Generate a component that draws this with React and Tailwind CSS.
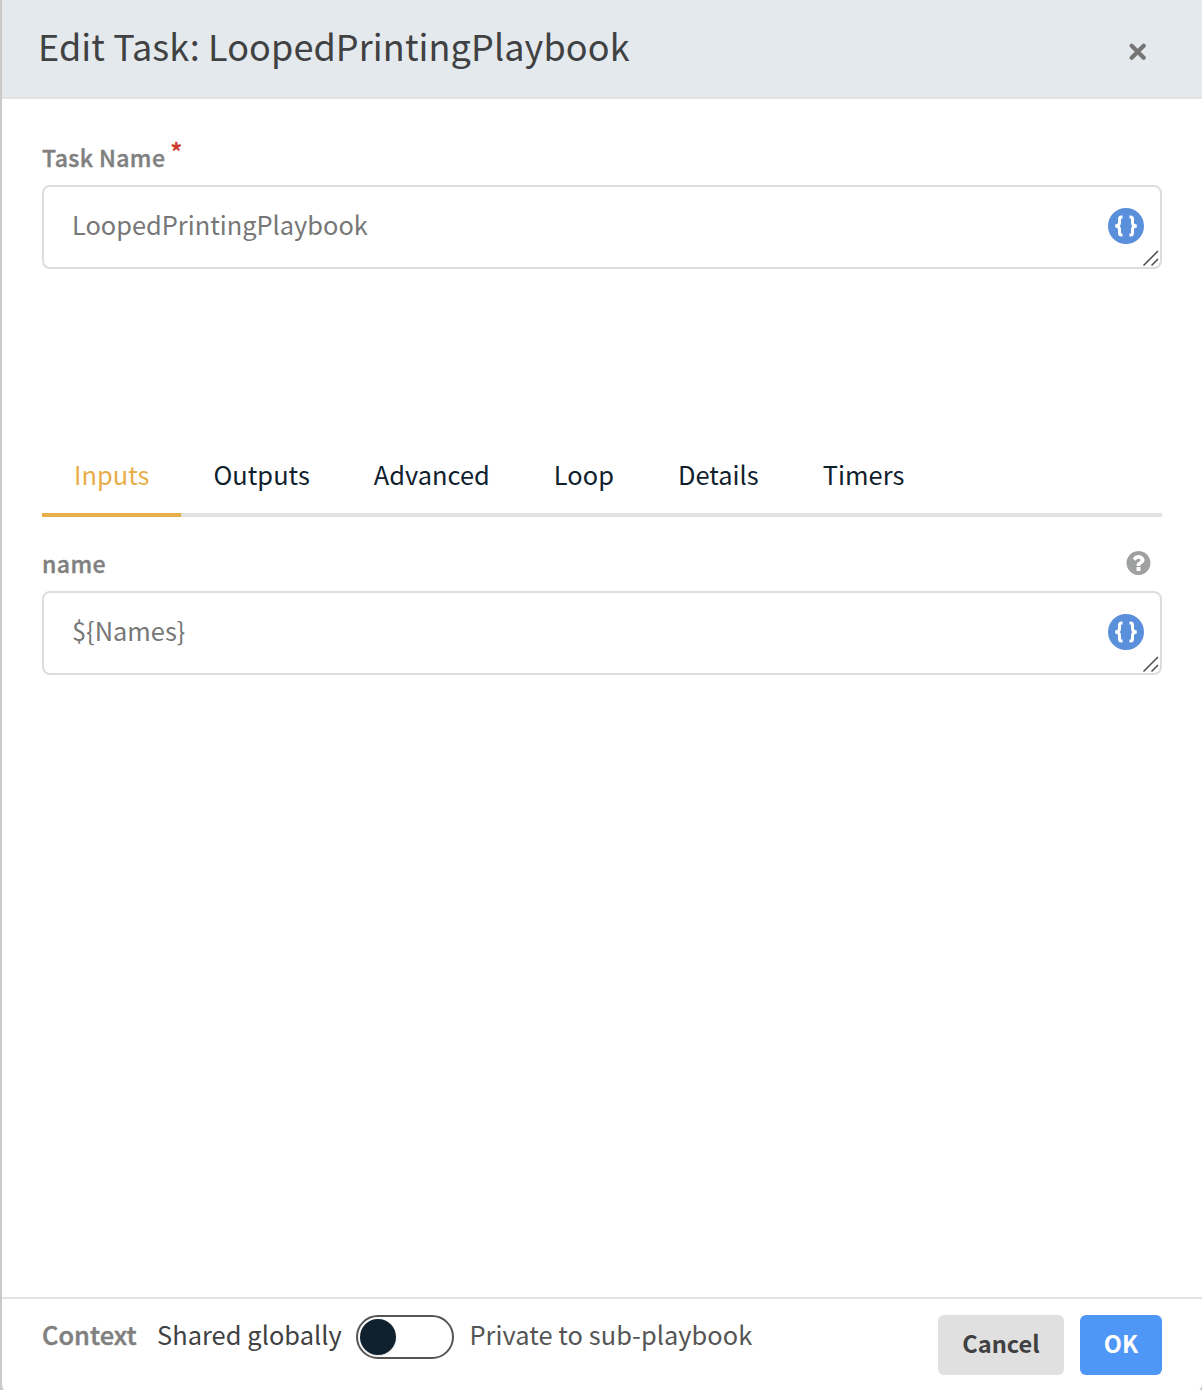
import { useState } from "react";

const HELP_PATH =
  "M1024 1376v-192q0-14-9-23t-23-9h-192q-14 0-23 9t-9 23v192q0 14 9 23t23 9h192q14 0 23-9t9-23zm256-672q0-88-55.5-163t-138.5-116-170-41q-243 0-371 213-15 24 8 42l132 100q7 6 19 6 16 0 25-12 53-68 86-92 34-24 86-24 48 0 85.500 26t37.500 59q0 38-20 61t-68 45q-63 28-115.500 86.500t-52.500 125.500v36q0 14 9 23t23 9h192q14 0 23-9t9-23q0-19 21.500-49.500t54.500-49.500q32-18 49-28.500t46-35 44.500-48 28-60.500 12.500-81zm384 192q0 209-103 385.500t-279.500 279.500-385.500 103-385.500-103-279.500-279.500-103-385.500 103-385.500 279.500-279.500 385.500-103 385.500 103 279.500 279.500 103 385.500z";

function BracesButton() {
  return (
    <button type="button" aria-label="Insert expression" className="absolute right-4 top-[21px] size-9">
      <svg viewBox="0 0 36 36" className="size-9" fill="none">
        <circle cx="18" cy="18" r="18" fill="#5a8fdb" />
        <g stroke="#fff" strokeWidth="3">
          <path d="M14.500 9h-1q-2 0-2 2v3.800q0 3.200-4.300 3.200q4.300 0 4.300 3.200v3.800q0 2 2 2h1" />
          <path d="M21.500 9h1q2 0 2 2v3.800q0 3.200 4.300 3.200q-4.300 0-4.300 3.200v3.800q0 2-2 2h-1" />
        </g>
      </svg>
    </button>
  );
}

function Field({ value }) {
  return (
    <div className="relative flex h-[84px] items-start rounded-lg border-2 border-[#dddddd] bg-white pl-7 pt-[19px] text-[25.4px] leading-9 text-[#777777]">
      <span>{value}</span>
      <BracesButton />
      <svg viewBox="0 0 18 18" className="absolute bottom-0 right-0 size-[18px]" stroke="#4a4a4a" strokeWidth="1.5">
        <path d="M1.500 16.500 16 2M9.500 16.500l6.500-6.500" />
      </svg>
    </div>
  );
}

const tabs = ["Inputs", "Outputs", "Advanced", "Loop", "Details", "Timers"];

export default function App() {
  const [active, setActive] = useState("Inputs");
  return (
    <div className="h-[1390px] w-[1202px] overflow-hidden bg-[#c9c9c9] font-['Noto_Sans_CJK_SC',sans-serif]">
      <div className="flex h-[1392px] flex-col overflow-hidden rounded-b-lg border-l-2 border-[#c9c9c9] bg-white">
        <header className="flex h-[99px] shrink-0 items-start justify-between border-b-2 border-[#e1e3e5] bg-[#e4e9ed] pl-9 pr-[55px]">
          <h1 className="mt-[21px] text-[36px] leading-[48px] tracking-[0.1px] text-[#404142]">Edit Task: LoopedPrintingPlaybook</h1>
          <button type="button" aria-label="Close" className="mt-[43px]">
            <svg viewBox="0 0 18 18" className="block size-[18px]" stroke="#757575" strokeWidth="4.2" strokeLinecap="round">
              <path d="M2.700 2.700l12 12M14.700 2.700l-12 12" />
            </svg>
          </button>
        </header>
        <main className="flex-1 px-10 pt-[41px]">
          <label className="flex h-[45px] text-[23px] font-medium leading-[34px] tracking-[0.4px] text-[#808080] [-webkit-text-stroke:0.4px_#808080]">
            Task Name
            <span className="-mt-1.5 ml-[5px] text-[25px] text-[#cc3a2e] [-webkit-text-stroke:0.4px_#cc3a2e]">*</span>
          </label>
          <Field value="LoopedPrintingPlaybook" />
          <nav className="mt-[171px] flex h-[77px] border-b-4 border-[#e2e2e2]">
            {tabs.map((tab) => (
              <button
                key={tab}
                type="button"
                onClick={() => setActive(tab)}
                className={
                  "h-[77px] border-b-4 px-8 pb-1.5 text-[25.4px] leading-9 tracking-[0.03px] " +
                  (tab === active ? "border-[#e8ae49] text-[#e8ae49]" : "border-transparent text-[#10212e]")
                }
              >
                {tab}
              </button>
            ))}
          </nav>
          <div className="mt-[29px] flex h-[45px] justify-between pr-2.5">
            <label className="text-[23px] font-medium leading-[34px] tracking-[0.4px] text-[#808080] [-webkit-text-stroke:0.4px_#808080]">name</label>
            <svg viewBox="-32 0 1792 1792" className="mt-[3px] size-7" fill="#9fa1a0">
              <path d={HELP_PATH} />
            </svg>
          </div>
          <Field value="${Names}" />
        </main>
        <footer className="flex h-[95px] shrink-0 border-t-2 border-[#e2e2e2] px-10 pt-4">
          <div className="flex h-11 items-start text-[25.4px] leading-9 tracking-[0.05px]">
            <span className="mt-px w-[115px] font-medium text-[#808080] [-webkit-text-stroke:0.5px_#808080]">Context</span>
            <span className="mt-px w-[199px] text-[#404142]">Shared globally</span>
            <span className="flex h-11 w-[98px] items-center rounded-full border-2 border-[#555] px-0.5">
              <span className="size-9 rounded-full bg-[#0f212e] shadow-sm" />
            </span>
            <span className="ml-[15.5px] mt-px text-[#555]">Private to sub-playbook</span>
          </div>
          <div className="ml-auto flex gap-4 text-[23.6px] font-bold">
            <button type="button" className="h-[60px] w-[126px] rounded-md bg-[#e0e0e0] pb-0.5 text-[#404142]">Cancel</button>
            <button type="button" className="h-[60px] w-[82px] rounded-md bg-[#4f97f7] pb-0.5 text-white">OK</button>
          </div>
        </footer>
      </div>
    </div>
  );
}
